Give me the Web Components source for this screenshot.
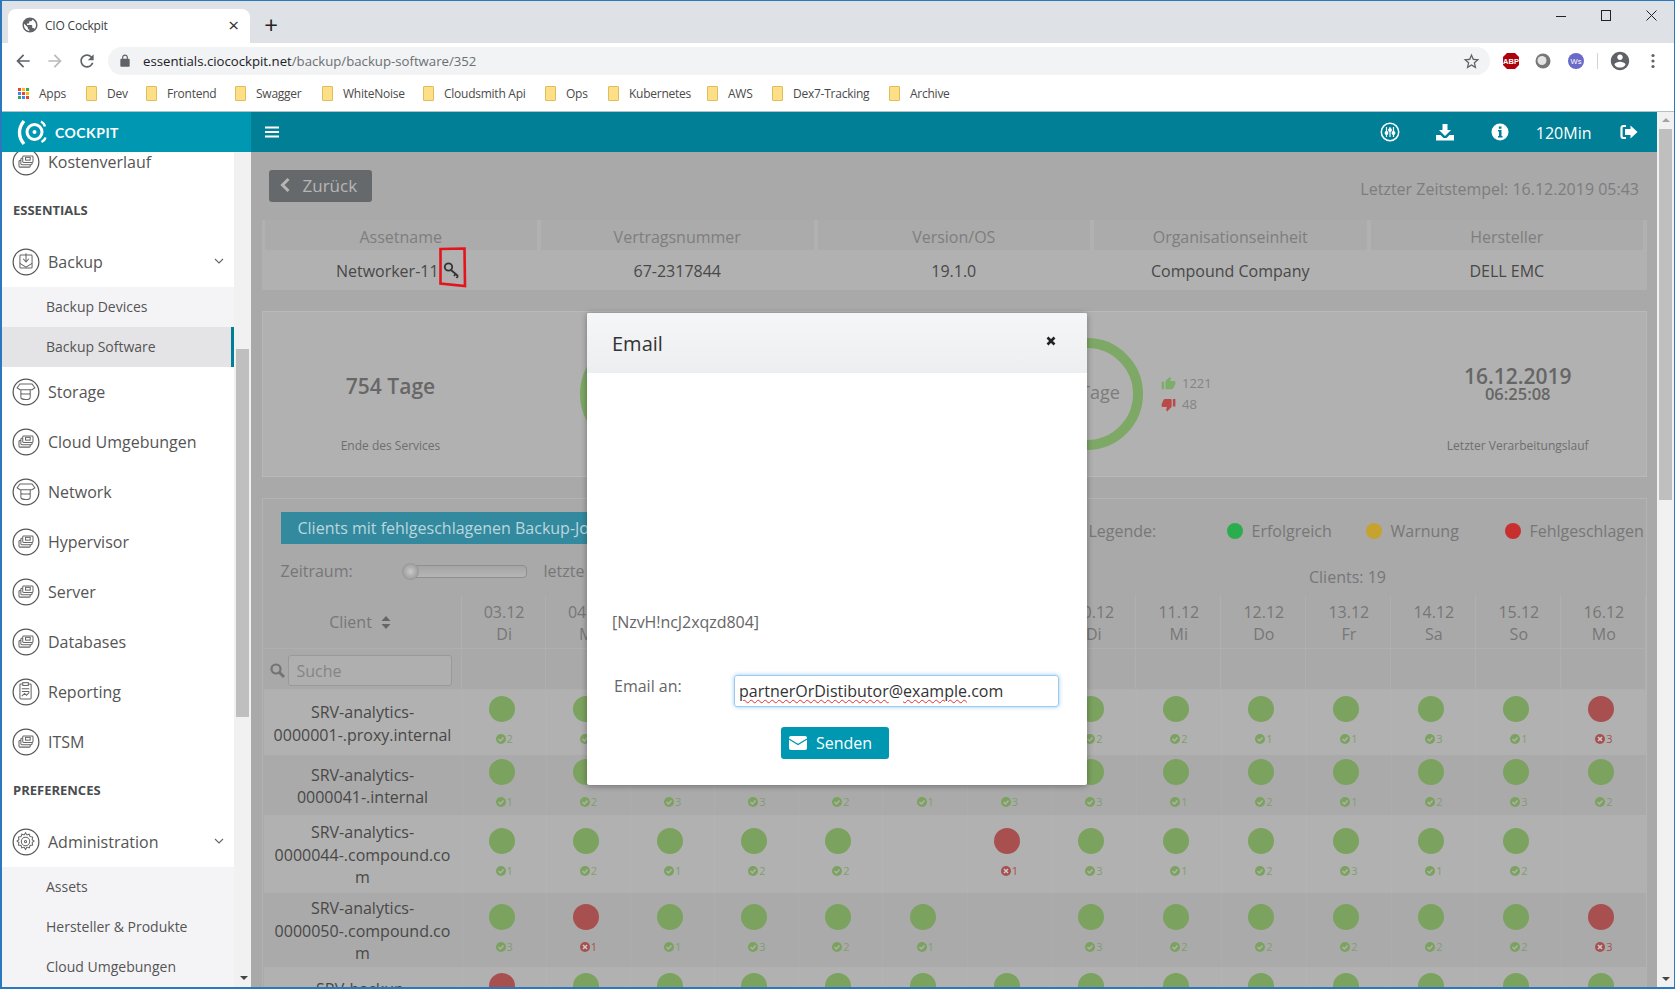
<!DOCTYPE html>
<html lang="de">
<head>
<meta charset="utf-8">
<title>CIO Cockpit</title>
<style>
  html, body { margin: 0; height: 100%; overflow: hidden; background: #fff; }
  body { font-family: "Open Sans", "Liberation Sans", sans-serif; }
</style>
</head>
<body>
<app-window>
  <browser-chrome></browser-chrome>
  <div slot="app">
    <side-nav></side-nav>
  </div>
  <app-header slot="main"></app-header>
  <backup-page slot="main">
    <asset-table></asset-table>
    <kpi-card></kpi-card>
    <job-table>
      <job-row h="65" name="SRV-analytics-|0000001-.proxy.internal" days="g2 g1 g3 g2 g1 g2 g3 g2 g2 g1 g1 g3 g1 r3"></job-row>
      <job-row h="60" alt name="SRV-analytics-|0000041-.internal" days="g1 g2 g3 g3 g2 g1 g3 g3 g1 g2 g1 g2 g3 g2"></job-row>
      <job-row h="78" name="SRV-analytics-|0000044-.compound.co|m" days="g1 g2 g1 g2 g2 - r1 g3 g1 g2 g3 g1 g2 -"></job-row>
      <job-row h="74" alt name="SRV-analytics-|0000050-.compound.co|m" days="g3 r1 g1 g3 g2 g1 - g3 g2 g2 g2 g2 g2 r3"></job-row>
      <job-row h="65" name="SRV-backup-|0000051-.internal" days="r1 g1 g1 g2 g2 g1 g3 g2 g1 g2 g1 g3 g2 g1"></job-row>
    </job-table>
  </backup-page>
  <mail-modal slot="main"></mail-modal>
  <page-scrollbar slot="bar"></page-scrollbar>
</app-window>

<script>
const ICON = {
  back: 'M20 11H7.83l5.59-5.59L12 4l-8 8 8 8 1.41-1.41L7.83 13H20v-2z',
  reload: 'M17.65 6.35C16.2 4.9 14.21 4 12 4c-4.42 0-7.99 3.58-7.99 8s3.57 8 7.99 8c3.73 0 6.84-2.55 7.73-6h-2.08c-.82 2.33-3.04 4-5.65 4-3.31 0-6-2.69-6-6s2.69-6 6-6c1.66 0 3.14.69 4.22 1.78L13 11h7V4l-2.35 2.35z',
  lock: 'M18 8h-1V6c0-2.76-2.24-5-5-5S7 3.24 7 6v2H6c-1.1 0-2 .9-2 2v10c0 1.1.9 2 2 2h12c1.1 0 2-.9 2-2V10c0-1.1-.9-2-2-2zM9 6c0-1.66 1.34-3 3-3s3 1.34 3 3v2H9V6z',
  star: 'M22 9.24l-7.19-.62L12 2 9.19 8.63 2 9.24l5.46 4.73L5.82 21 12 17.27 18.18 21l-1.63-7.03L22 9.24zM12 15.4l-3.76 2.27 1-4.28-3.32-2.88 4.38-.38L12 6.1l1.71 4.04 4.38.38-3.32 2.88 1 4.28L12 15.4z',
  account: 'M12 2C6.48 2 2 6.48 2 12s4.48 10 10 10 10-4.48 10-10S17.52 2 12 2zm0 3c1.66 0 3 1.34 3 3s-1.34 3-3 3-3-1.34-3-3 1.34-3 3-3zm0 14.2c-2.5 0-4.71-1.28-6-3.22.03-1.99 4-3.08 6-3.08 1.99 0 5.97 1.09 6 3.08-1.29 1.94-3.5 3.22-6 3.22z',
  globe: 'M12 2C6.48 2 2 6.48 2 12s4.48 10 10 10 10-4.48 10-10S17.52 2 12 2zm-1 17.93c-3.95-.49-7-3.85-7-7.93 0-.62.08-1.21.21-1.79L9 15v1c0 1.1.9 2 2 2v1.93zm6.9-2.54c-.26-.81-1-1.39-1.9-1.39h-1v-3c0-.55-.45-1-1-1H8v-2h2c.55 0 1-.45 1-1V7h2c1.1 0 2-.9 2-2v-.41c2.93 1.19 5 4.06 5 7.41 0 2.08-.8 3.97-2.1 5.39z',
  thumb: 'M1 21h4V9H1v12zm22-11c0-1.1-.9-2-2-2h-6.31l.95-4.57.03-.32c0-.41-.17-.79-.44-1.06L14.17 1 7.59 7.59C7.22 7.95 7 8.45 7 9v10c0 1.1.9 2 2 2h9c.83 0 1.54-.5 1.84-1.22l3.02-7.05c.09-.23.14-.47.14-.73v-2z'
};

const svgPath = (d, size, fill, extra = '') =>
  `<svg width="${size}" height="${size}" viewBox="0 0 24 24" ${extra}><path d="${d}" fill="${fill}"/></svg>`;

// round outline + glyph used by every top level menu entry
const NAV_GLYPH = {
  layers: '<rect x="8" y="14" width="12" height="7" rx="1"/><rect x="10" y="11.5" width="12" height="7" rx="1" fill="#fff"/><rect x="12" y="9" width="11" height="7" rx="1" fill="#fff"/><rect x="15" y="10.5" width="5" height="3"/>',
  backup: '<rect x="9" y="8" width="13" height="14" rx="1"/><path d="M15.5 6v9M12.5 12l3 3.5 3-3.5M9 17l6.500 4 6.500-4"/>',
  storage: '<path d="M6 11l3-4h13l3 4-3 2H9zM10 13v8c0 1 2 2.500 5.500 2.500s4.500-1.500 4.500-2.500v-8M10 17c1 1 9 1 10 0"/>',
  report: '<rect x="9" y="7" width="12" height="16" rx="1"/><rect x="12" y="5.500" width="6" height="3" fill="#fff"/><path d="M11 12h8M11 15h8M11 20l3-3 2 2 3-3"/>',
  gear: '<path d="M15 5.500l1.500 2.500 2.500-.8 .8 2.500 2.800.500-.5 2.800 2 1.500-2 1.500 .5 2.800-2.800.5-.8 2.500-2.500-.8-1.500 2.500-1.500-2.500-2.500.8-.8-2.500-2.800-.5.5-2.800-2-1.500 2-1.500-.5-2.800 2.800-.5.8-2.500 2.500.8z"/><circle cx="15" cy="15" r="4.500"/><circle cx="15" cy="15" r="1.200"/>'
};

function define(name, html, Base = HTMLElement) {
  customElements.define(name, class extends Base {
    constructor() {
      super();
      this.attachShadow({mode: 'open'}).innerHTML = html;
    }
  });
}

define('app-window', `
  <style>
    :host { display: flex; flex-direction: column; box-sizing: border-box; height: 989px; width: 1675px;
      border: solid #2b78bd; border-width: 1px 1px 2px 2px; overflow: hidden; }
    .app { flex: 1; display: flex; min-height: 0; }
    .side { flex: 0 0 249px; display: flex; }
    .main { flex: 1; position: relative; min-width: 0; display: flex; flex-direction: column; overflow: hidden; }
    .bar { flex: 0 0 17px; display: flex; }
  </style>
  <slot></slot>
  <div class="app">
    <div class="side"><slot name="app"></slot></div>
    <div class="main"><slot name="main"></slot></div>
    <div class="bar"><slot name="bar"></slot></div>
  </div>`);

const BOOKMARKS = [['Dev', 60], ['Frontend', 89], ['Swagger', 87], ['WhiteNoise', 101], ['Cloudsmith Api', 122],
  ['Ops', 63], ['Kubernetes', 99], ['AWS', 65], ['Dex7-Tracking', 117], ['Archive', 60]];
const APPS_DOTS = ['#ea4335', '#fbbc05', '#34a853', '#4285f4', '#ea4335', '#fbbc05', '#34a853', '#4285f4', '#ea4335']
  .map(c => `<i style="background:${c}"></i>`).join('');

define('browser-chrome', `
  <style>
    :host { display: block; font-family: "Open Sans", "Liberation Sans", sans-serif; }
    svg { display: block; flex: none; }
    .strip { height: 42px; background: #dee1e6; display: flex; align-items: flex-end; padding-left: 6px; }
    .tab { width: 242px; height: 34px; background: #fff; border-radius: 8px 8px 0 0; box-sizing: border-box;
      display: flex; align-items: center; padding: 0 11px 2px 13px; font-size: 12px; color: #3c4043; letter-spacing: -.2px; }
    .tab span { flex: 1; margin-left: 6px; }
    .tab b { font-weight: 400; font-size: 19px; color: #333; line-height: 1; }
    .plus { margin: 0 0 6px 9px; font-size: 24px; line-height: 24px; color: #222; width: 24px; text-align: center; font-weight: 400; }
    .win { margin-left: auto; display: flex; align-self: flex-start; }
    .win div { width: 45px; height: 28px; display: flex; align-items: center; justify-content: center; }
    .tools { height: 36px; display: flex; align-items: center; background: #fff; padding-left: 11px; }
    .tools > svg { margin-right: 12px; }
    .omni { width: 1382px; margin-left: -1px; height: 28px; border-radius: 14px; background: #f1f3f4; display: flex; align-items: center;
      padding: 0 9px 0 10px; box-sizing: border-box; font-size: 13.200px; color: #6b6f73; }
    .omni span { margin-left: 11px; flex: 1; }
    .omni em { font-style: normal; color: #202124; }
    .ext { display: flex; align-items: center; margin-left: 11px; }
    .sep { width: 1px; height: 16px; background: #d0d2d4; margin: 0 11px 0 12px; }
    .marks { height: 29px; padding-bottom: 3px; display: flex; align-items: center; padding-left: 16px; border-bottom: 1px solid #b5bfc6; background: #fff;
      font-size: 12px; color: #4a4a4a; letter-spacing: -.25px; }
    .apps { flex: 0 0 68px; display: flex; align-items: center; gap: 10px; }
    .grid { display: grid; grid-template-columns: repeat(3, 3px); gap: 1px; }
    .grid i { width: 3px; height: 3px; display: block; }
    .mark { display: flex; align-items: center; gap: 10px; white-space: nowrap; }
    .folder { width: 11px; height: 15px; background: #fddf87; border: 1px solid #e0bd5a; box-sizing: border-box; border-radius: 1px; flex: none; }
  </style>
  <div class="strip">
    <div class="tab">
      ${svgPath(ICON.globe, 18, '#5f6368')}
      <span>CIO Cockpit</span><b>&#215;</b>
    </div>
    <div class="plus">+</div>
    <div class="win">
      <div><svg width="11" height="11"><path d="M0 6.500h10" stroke="#222"/></svg></div>
      <div><svg width="11" height="11"><rect x=".5" y=".5" width="9" height="10" fill="none" stroke="#222"/></svg></div>
      <div><svg width="11" height="11"><path d="M.5 .5l10 10M10.500 .5l-10 10" stroke="#222"/></svg></div>
    </div>
  </div>
  <div class="tools">
    ${svgPath(ICON.back, 20, '#5f6368')}
    ${svgPath(ICON.back, 20, '#b8babd', 'style="transform:scaleX(-1)"')}
    ${svgPath(ICON.reload, 20, '#5f6368')}
    <div class="omni">
      ${svgPath(ICON.lock, 14, '#5f6368')}
      <span><em>essentials.ciocockpit.net</em>/backup/backup-software/352</span>
      ${svgPath(ICON.star, 19, '#5f6368')}
    </div>
    <div class="ext">
      <svg width="20" height="20" viewBox="0 0 20 20"><path d="M6 2h8l4 4v8l-4 4H6l-4-4V6z" fill="#b0000e"/><text x="10" y="13" font-size="7.500" font-weight="700" font-family="Liberation Sans" fill="#fff" text-anchor="middle">ABP</text></svg>
      <svg style="margin-left:13px" width="18" height="18" viewBox="0 0 18 18"><circle cx="9" cy="9" r="7.500" fill="#777"/><circle cx="8" cy="8.500" r="4.500" fill="#e4e4e4"/></svg>
      <svg style="margin-left:15px" width="18" height="18" viewBox="0 0 18 18"><circle cx="9" cy="9" r="8" fill="#6a6ac8"/><text x="9" y="12" font-size="7.500" font-family="Liberation Sans" fill="#fff" text-anchor="middle">Ws</text></svg>
      <div class="sep"></div>
      ${svgPath(ICON.account, 22, '#5f6368')}
      <svg style="margin-left:20px" width="4" height="16"><circle cx="2" cy="2.500" r="1.600" fill="#5f6368"/><circle cx="2" cy="8" r="1.600" fill="#5f6368"/><circle cx="2" cy="13.500" r="1.600" fill="#5f6368"/></svg>
    </div>
  </div>
  <div class="marks">
    <div class="apps"><div class="grid">${APPS_DOTS}</div>Apps</div>
    ${BOOKMARKS.map(([t, w]) => `<div class="mark" style="flex:0 0 ${w}px"><span class="folder"></span>${t}</div>`).join('')}
  </div>`);

class NavItem extends HTMLElement {
  constructor() {
    super();
    const glyph = NAV_GLYPH[this.getAttribute('icon')] || NAV_GLYPH.layers;
    const chevron = this.hasAttribute('open') ? '<svg class="chev" width="10" height="7" viewBox="0 0 10 7"><path d="M1 1l4 4 4-4" fill="none" stroke="#666" stroke-width="1.100"/></svg>' : '';
    this.attachShadow({mode: 'open'}).innerHTML = `
      <style>
        :host { display: flex; height: 50px; align-items: center; padding-left: 10px; font-size: 16px; color: #555; background: #fff; }
        .ic { flex: none; margin-right: 8px; }
        span { flex: 1; }
        .chev { margin-right: 10px; }
      </style>
      <svg class="ic" width="28" height="28" viewBox="0 0 30 30">
        <circle cx="15" cy="15" r="13.800" fill="none" stroke="#555" stroke-width="1.300"/>
        <g fill="none" stroke="#666" stroke-width="1.100" transform="translate(-.5 -.5)">${glyph}</g>
      </svg>
      <span><slot></slot></span>${chevron}`;
  }
}
customElements.define('nav-item', NavItem);

define('nav-title', `
  <style>
    :host { display: flex; height: 47px; padding-bottom: 3px; align-items: center; padding-left: 11px; font-size: 13px; font-weight: 700; color: #4a4d50; background: #fff; }
  </style><slot></slot>`);

define('nav-sub', `
  <style>
    :host { display: flex; height: 40px; align-items: center; padding-left: 44px; font-size: 14px; color: #555; background: #f4f4f7; box-sizing: border-box; }
    :host([active]) { background: #e4e4e6; border-right: 3px solid #007f96; }
  </style><slot></slot>`);

define('side-nav', `
  <style>
    :host { display: flex; flex-direction: column; flex: 1; width: 249px; overflow: hidden; }
    .logo { height: 40px; flex: none; background: #0097b2; display: flex; align-items: center; padding-left: 15px; color: #fff;
      font: 700 14px "Lato", "Open Sans", sans-serif; letter-spacing: .5px; gap: 8px; }
    .body { flex: 1; display: flex; min-height: 0; overflow: hidden; }
    .menu { width: 232px; flex: none; margin-top: -15.500px; }
    .track { flex: 1; background: #f1f1f1; padding-left: 2px; }
    .thumb { width: 13px; height: 368px; margin-top: 197px; background: #bfbfbf; }
    .end { position: absolute; left: 240px; top: 976px; width: 0; height: 0; border: solid transparent; border-width: 4px 4px 0; border-top-color: #444; }
  </style>
  <div class="logo">
    <svg width="30" height="30" viewBox="0 0 30 30" fill="none" stroke="#fff">
      <circle cx="17.500" cy="15" r="7.500" stroke-width="3"/>
      <circle cx="17.500" cy="15" r="2" fill="#fff" stroke="none"/>
      <path d="M7 4C1 11 1 20 7 27" stroke-width="3.400"/>
      <path d="M24 4.500c2 1 3.500 3 4 5M24.500 25c2-1 3.500-2.500 4-4.500" stroke-width="2.500"/>
    </svg>
    COCKPIT
  </div>
  <div class="body">
    <div class="menu">
      <nav-item>Kostenverlauf</nav-item>
      <nav-title>ESSENTIALS</nav-title>
      <nav-item icon="backup" open>Backup</nav-item>
      <nav-sub>Backup Devices</nav-sub>
      <nav-sub active>Backup Software</nav-sub>
      <nav-item icon="storage">Storage</nav-item>
      <nav-item>Cloud Umgebungen</nav-item>
      <nav-item icon="storage">Network</nav-item>
      <nav-item>Hypervisor</nav-item>
      <nav-item>Server</nav-item>
      <nav-item>Databases</nav-item>
      <nav-item icon="report">Reporting</nav-item>
      <nav-item>ITSM</nav-item>
      <nav-title>PREFERENCES</nav-title>
      <nav-item icon="gear" open>Administration</nav-item>
      <nav-sub>Assets</nav-sub>
      <nav-sub>Hersteller &amp; Produkte</nav-sub>
      <nav-sub>Cloud Umgebungen</nav-sub>
    </div>
    <div class="track"><div class="thumb"></div></div>
  </div>
  <div class="end"></div>`);

define('app-header', `
  <style>
    :host { display: flex; flex: none; height: 40px; background: #007f96; align-items: center; color: #fff; font-size: 16px; position: relative; }
    svg { display: block; flex: none; }
    .burger { margin-left: 14px; }
    .right { margin-left: auto; display: flex; align-items: center; }
  </style>
  <svg class="burger" width="14" height="12"><path d="M0 1.500h14M0 6h14M0 10.500h14" stroke="#fff" stroke-width="2.200"/></svg>
  <div class="right">
    <svg width="20" height="20" viewBox="0 0 20 20" fill="none" stroke="#fff" stroke-width="1.200">
      <circle cx="10" cy="10" r="8.700" stroke-width="1.500"/>
      <path d="M6.500 5v10M10 5v10M13.500 5v10"/>
      <g fill="#fff"><circle cx="6.500" cy="11" r="1.300"/><circle cx="10" cy="8" r="1.300"/><circle cx="13.500" cy="11" r="1.300"/></g>
    </svg>
    <svg style="margin-left:36px" width="18" height="18" viewBox="0 0 18 18" fill="#fff">
      <path d="M6.500 1h5v6h3.500l-6 6-6-6h3.500z"/><path d="M0 12h4.500l3 3h3l3-3h4.500v5.500h-18z"/>
    </svg>
    <svg style="margin-left:37px" width="18" height="18" viewBox="0 0 18 18">
      <circle cx="9" cy="9" r="8.500" fill="#fff"/>
      <path d="M7 7h3.500v6h1v1.500h-4.500v-1.500h1v-4.500h-1zM7.800 3.500h2.700v2.300h-2.700z" fill="#007f96"/>
    </svg>
    <span style="margin-left:26.500px;position:relative;top:1px">120Min</span>
    <svg style="margin:0 19px 0 28.500px" width="18" height="16" viewBox="0 0 18 16">
      <path d="M6 2H3.500A2 2 0 0 0 1.500 4v8a2 2 0 0 0 2 2H6" fill="none" stroke="#fff" stroke-width="2.200"/>
      <path d="M10.500 1.500L17.500 8l-7 6.500V11H5V5h5.500z" fill="#fff"/>
    </svg>
  </div>`);

define('backup-page', `
  <style>
    :host { display: block; flex: 1; min-height: 0; overflow: hidden; background: #a9a9a9; padding: 18px 10px 0 10.500px;
      font-size: 16px; color: #7c7c7c; }
    .top { display: flex; justify-content: space-between; align-items: center; height: 32px; }
    .btn { width: 103px; height: 32px; margin-left: 7px; background: #66696c; border-radius: 3px; color: #b6b6b6; font-size: 17px; display: flex;
      align-items: center; box-sizing: border-box; padding: 0 0 2px 10px; gap: 12px; }
    .stamp { margin-right: 8px; font-size: 16px; color: #7d7d7d; position: relative; top: 3px; }
    ::slotted(*) { margin-top: 18px; }
  </style>
  <div class="top">
    <div class="btn">
      <svg width="12" height="16" viewBox="0 0 12 16"><path d="M9.500 2L3.500 8l6 6" fill="none" stroke="#b6b6b6" stroke-width="3"/></svg>
      Zurück
    </div>
    <div class="stamp">Letzter Zeitstempel: 16.12.2019 05:43</div>
  </div>
  <slot></slot>`);

const ASSET_COLS = [['Assetname', 'Networker-11'], ['Vertragsnummer', '67-2317844'], ['Version/OS', '19.1.0'],
  ['Organisationseinheit', 'Compound Company'], ['Hersteller', 'DELL EMC']];

define('asset-table', `
  <style>
    :host { display: grid; grid-template-columns: repeat(5, 1fr); grid-template-rows: 30px 40px; background: #b1b1b1;
      padding: 0 0 0 3px; position: relative; font-size: 16px; margin-top: 18px; }
    .h { background: #ababab; color: #7e7e7e; display: flex; align-items: center; justify-content: center; margin-right: 4px; padding-top: 4px; box-sizing: border-box; }
    .v { color: #484848; display: flex; align-items: center; justify-content: center; margin-right: 4px; padding-top: 2px; box-sizing: border-box; }
    .v.first { padding-right: 27px; }
    .mark { position: absolute; left: 177px; top: 27px; }
  </style>
  ${ASSET_COLS.map(([h]) => `<div class="h">${h}</div>`).join('')}
  ${ASSET_COLS.map(([, v], i) => `<div class="v ${i ? '' : 'first'}">${v}</div>`).join('')}
  <svg class="mark" width="28" height="41" viewBox="0 0 28 41" fill="none">
    <path d="M1.500 2L25.500 1.500 26 39 1.500 36.500z" stroke="#e3141c" stroke-width="2.600"/>
    <circle cx="9.500" cy="20" r="3.700" stroke="#333" stroke-width="1.800"/>
    <path d="M12 23l7 6M16.500 27l-1.500 2M19 29l-1.500 2" stroke="#333" stroke-width="1.800"/>
  </svg>`);

define('kpi-card', `
  <style>
    :host { display: flex; height: 166px; box-sizing: border-box; background: #b1b1b1; border: 1px solid #b9b9b9; align-items: stretch;
      margin-top: 21px !important; }
    .col { display: flex; flex-direction: column; align-items: center; width: 256px; flex: none; position: relative; }
    .big { font-size: 21px; font-weight: 600; color: #676767; margin-top: 59px; line-height: 30px; }
    .cap { position: absolute; top: 126px; font-size: 12px; color: #6e6e6e; line-height: 16px; white-space: nowrap; }
    .ring { width: 112px; height: 112px; border-radius: 50%; border: 10.500px solid #7ea865; box-sizing: border-box; flex: none; margin-top: 26px;
      display: flex; align-items: center; justify-content: center; font-size: 18px; color: #7c7c7c; }
    .ring span { padding: 0 0 4px 26px; }
    .thumbs { margin-left: 18px; font-size: 13px; color: #848484; display: flex; flex-direction: column; margin-top: 63px; gap: 5px; }
    .thumbs div { display: flex; align-items: center; gap: 6px; height: 16px; }
    .date { font-size: 21px; font-weight: 600; color: #666; margin-top: 52px; line-height: 24px; }
    .time { font-size: 16.500px; font-weight: 600; color: #666; line-height: 17px; margin-top: -3px; }
  </style>
  <div class="col"><div class="big">754 Tage</div><div class="cap">Ende des Services</div></div>
  <div class="ring" style="margin-left:61.500px"></div>
  <div class="ring" style="margin-left:339px"><span>Tage</span></div>
  <div class="thumbs">
    <div>${svgPath(ICON.thumb, 15, '#7cae69')}1221</div>
    <div>${svgPath(ICON.thumb, 15, '#b94a48', 'style="transform:rotate(180deg)"')}48</div>
  </div>
  <div class="col" style="margin-left:177px;width:258px"><div class="date">16.12.2019</div><div class="time">06:25:08</div><div class="cap">Letzter Verarbeitungslauf</div></div>`);

const DATES = [['03.12', 'Di'], ['04.12', 'Mi'], ['05.12', 'Do'], ['06.12', 'Fr'], ['07.12', 'Sa'], ['08.12', 'So'], ['09.12', 'Mo'],
  ['10.12', 'Di'], ['11.12', 'Mi'], ['12.12', 'Do'], ['13.12', 'Fr'], ['14.12', 'Sa'], ['15.12', 'So'], ['16.12', 'Mo']];

define('job-table', `
  <style>
    :host { display: block; --job-cols: 198px repeat(7, 84.200px) repeat(7, 85px); border: 1px solid #b3b3b3; border-bottom: 0; margin-top: 21px !important;
      padding-top: 13px; font-size: 16px; color: #777; }
    .r1 { display: flex; padding-left: 18px; height: 32px; }
    .title { width: 560px; flex: none; background: #338a9f; color: #bcd6dd; display: flex; align-items: center; padding-left: 17px; box-sizing: border-box; white-space: nowrap; overflow: hidden; }
    .leg { display: flex; position: relative; top: 3px; align-items: center; margin-left: 248px; height: 32px; }
    .leg i { width: 16px; height: 16px; border-radius: 50%; display: block; margin-right: 8.500px; }
    .leg span { display: flex; align-items: center; }
    .r2 { display: flex; padding-left: 18px; align-items: center; height: 32px; margin-top: 11px; }
    .slider { width: 124px; height: 13px; flex: none; margin-left: 52px; background: linear-gradient(#a5a5a5, #b5b5b5); border: 1px solid #8f8f8f; border-radius: 4px; box-sizing: border-box; position: relative; }
    .slider b { position: absolute; left: -2px; top: -3px; width: 17px; height: 17px; border-radius: 50%; background: radial-gradient(#c9c9c9, #8f8f8f); border: 1px solid #999; box-sizing: border-box; }
    .cnt { position: absolute; left: 1058px; white-space: nowrap; margin-top: 11px; }
    .rows { display: grid; grid-template-columns: var(--job-cols); margin: 8px 0 0 1px; background: #a9a9a9; }
    .c { border: solid #afafaf; border-width: 0 1px 1px 0; display: flex; flex-direction: column; align-items: center; justify-content: center; line-height: 22px; }
    .hd { height: 54px; box-sizing: border-box; padding: 3px 0 0 2px; }
    .se { height: 41px; box-sizing: border-box; flex-direction: row; justify-content: flex-start; padding: 3px 0 0 6px; }
    .client { flex-direction: row; gap: 9px; padding: 1px 4px 0 0; }
    .input { width: 164px; height: 31px; border: 1px solid #999; border-radius: 3px; box-sizing: border-box; margin-left: 3px; padding-left: 8px; color: #858585; display: flex; align-items: center; background: #afafaf; }
  </style>
  <div class="r1">
    <div class="title">Clients mit fehlgeschlagenen Backup-Jobs</div>
    <div class="leg">
      <span style="width:138.500px">Legende:</span>
      <i style="background:#2bad4e"></i><span style="width:114.500px">Erfolgreich</span>
      <i style="background:#c6a22e"></i><span style="width:114.500px">Warnung</span>
      <i style="background:#c7302f"></i><span>Fehlgeschlagen</span>
    </div>
  </div>
  <div class="r2">
    <span style="width:70px">Zeitraum:</span>
    <div class="slider"><b></b></div>
    <span style="margin-left:17px">letzte</span>
    <span class="cnt">Clients: 19</span>
  </div>
  <div class="rows">
    <div class="c hd client">Client
      <svg width="10" height="15" viewBox="0 0 10 15" fill="#666"><path d="M5 1l4.500 5h-9zM5 14L.5 9h9z"/></svg>
    </div>
    ${DATES.map(([d, w]) => `<div class="c hd"><span>${d}</span><span>${w}</span></div>`).join('')}
    <div class="c se">
      <svg width="15" height="15" viewBox="0 0 15 15" fill="none" stroke="#737373" stroke-width="2.200"><circle cx="6" cy="6" r="4.500"/><path d="M9.500 9.500l4.500 4.500" stroke-width="2.800"/></svg>
      <div class="input">Suche</div>
    </div>
    ${DATES.map(() => '<div class="c se"></div>').join('')}
  </div>
  <slot></slot>`);

const OK_MARK = '<svg width="10" height="10" viewBox="0 0 10 10"><circle cx="5" cy="5" r="5" fill="#7ba25f"/><path d="M2.500 5l2 2 3-3.500" fill="none" stroke="#b1b1b1" stroke-width="1.500"/></svg>';
const FAIL_MARK = '<svg width="10" height="10" viewBox="0 0 10 10"><circle cx="5" cy="5" r="5" fill="#a85050"/><path d="M3 3l4 4M7 3l-4 4" fill="none" stroke="#ccc" stroke-width="1.500"/></svg>';

class JobRow extends HTMLElement {
  constructor() {
    super();
    const name = this.getAttribute('name').split('|').join('<br>');
    const cells = this.getAttribute('days').split(' ').map(day => {
      if (day === '-') return '<div class="day"></div>';
      const failed = day[0] === 'r';
      return `<div class="day"><i class="${failed ? 'bad' : 'ok'}"></i><span class="n ${failed ? 'nb' : ''}">${failed ? FAIL_MARK : OK_MARK}${day[1]}</span></div>`;
    }).join('');
    this.attachShadow({mode: 'open'}).innerHTML = `
      <style>
        :host { display: grid; grid-template-columns: var(--job-cols); height: ${this.getAttribute('h')}px; margin-left: 1px; background: ${this.hasAttribute('alt') ? '#aaaaaa' : '#b1b1b1'}; }
        .name { text-align: center; line-height: 22.500px; color: #484848; font-size: 16px; white-space: nowrap; align-self: center; padding-top: 2px; }
        .day { display: flex; flex-direction: column; align-items: center; justify-content: center; border-left: 1px solid rgba(255,255,255,.035); padding-bottom: 2px; box-sizing: border-box; }
        i { display: block; width: 26px; height: 26px; border-radius: 50%; margin-bottom: 9px; margin-right: 5px; }
        .ok { background: #7ba25f; }
        .bad { background: #a85050; }
        .n { display: flex; align-items: center; gap: 1px; font-size: 11px; line-height: 16px; color: #7f9f6f; letter-spacing: -.3px; }
        .nb { color: #a85050; }
      </style>
      <div class="name">${name}</div>${cells}`;
  }
}
customElements.define('job-row', JobRow);

define('mail-modal', `
  <style>
    :host { position: absolute; left: 336px; top: 201px; width: 500px; height: 472px; background: #fff; border-radius: 2px;
      box-shadow: 0 1px 6px rgba(0,0,0,.35); display: flex; flex-direction: column; font-size: 16px; color: #666; }
    .head { flex: none; height: 60px; background: linear-gradient(#f5f6f8, #eceef0); display: flex; align-items: center; justify-content: space-between;
      padding: 0 31px 0 25px; font-size: 20px; color: #333; border-radius: 2px 2px 0 0; }
    .head svg { position: relative; top: -2px; }
    .code { margin: 237px 0 0 25px; line-height: 24px; letter-spacing: -.05px; }
    .row { display: flex; align-items: flex-start; margin: 41px 0 0 27px; }
    .lab { width: 120px; flex: none; line-height: 22px; }
    .input { width: 325px; height: 32px; box-sizing: border-box; border: 1px solid #9ecaea; border-radius: 3px; box-shadow: 0 0 4px rgba(82,168,236,.6);
      font-size: 16px; color: #333; padding-left: 4px; line-height: 30px; white-space: nowrap; }
    .input u { text-decoration: underline wavy #e03030 1px; text-underline-offset: 2px; }
    .send { align-self: flex-start; margin: 20px 0 0 194px; width: 108px; height: 32px; background: #0097b2; border-radius: 3px; color: #fff; font-size: 16px; display: flex;
      align-items: center; box-sizing: border-box; padding-left: 8px; gap: 9px; }
  </style>
  <div class="head">Email
    <svg width="10" height="10" viewBox="0 0 10 10"><path d="M1.500 1.500l7 7M8.500 1.500l-7 7" stroke="#222" stroke-width="2.600"/></svg>
  </div>
  <div class="code">[NzvH!ncJ2xqzd804]</div>
  <div class="row">
    <div class="lab">Email an:</div>
    <div class="input"><u>partnerOrDistibutor</u>@<u>example</u>.com</div>
  </div>
  <div class="send">
    <svg width="18" height="14" viewBox="0 0 18 14"><rect y="0" width="18" height="14" rx="2" fill="#fff"/><path d="M0 3l9 5.500L18 3" fill="none" stroke="#0097b2" stroke-width="1.400"/></svg>
    Senden
  </div>`);

define('page-scrollbar', `
  <style>
    :host { display: block; flex: 1; background: #f1f1f1; position: relative; }
    .thumb { position: absolute; left: 2px; top: 17px; width: 13px; height: 371px; background: #bfbfbf; }
    .up, .down { position: absolute; left: 5px; width: 0; height: 0; border: solid transparent; }
    .up { top: 6px; border-width: 0 4px 4px; border-bottom-color: #a3a3a3; }
    .down { bottom: 6px; border-width: 4px 4px 0; border-top-color: #444; }
  </style>
  <div class="up"></div><div class="thumb"></div><div class="down"></div>`);
</script>
</body>
</html>
